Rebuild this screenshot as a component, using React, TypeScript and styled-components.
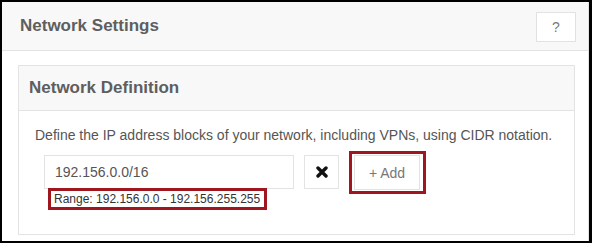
import React from "react";
import styled, { createGlobalStyle } from "styled-components";

const Global = createGlobalStyle`
  html, body { margin: 0; padding: 0; background: #fff; }
  body { font-family: "Liberation Sans", Arial, sans-serif; }
  * { box-sizing: border-box; }
`;

const Frame = styled.div`
  width: 592px;
  height: 243px;
  border-style: solid;
  border-color: #000;
  border-width: 2px 3px 2px 2px;
  background: #fff;
`;

const OuterPanel = styled.div`
  height: 100%;
  border-right: 1px solid #e3e3e3;
  display: flex;
  flex-direction: column;
`;

const OuterHeader = styled.div`
  height: 49px;
  display: flex;
  align-items: center;
  justify-content: space-between;
  padding: 0 12px 0 18px;
  background: #f8f8f8;
  border-bottom: 1px solid #e3e3e3;
`;

const OuterTitle = styled.h2`
  margin: 0;
  font-size: 17px;
  font-weight: bold;
  color: #5e5e5e;
`;

const HelpButton = styled.button`
  width: 40px;
  height: 30px;
  margin-top: 2px;
  border: 1px solid #e2e2e2;
  background: #fff;
  color: #7a7a7a;
  font-family: "Liberation Sans", Arial, sans-serif;
  font-size: 14px;
  padding: 0;
`;

const OuterBody = styled.div`
  padding: 14px 13px 0 16px;
`;

const InnerPanel = styled.div`
  border: 1px solid #e3e3e3;
  height: 170px;
`;

const InnerHeader = styled.div`
  height: 45px;
  display: flex;
  align-items: center;
  padding: 0 10px;
  background: #f8f8f8;
  border-bottom: 1px solid #e3e3e3;
`;

const InnerTitle = styled.h3`
  margin: 0;
  font-size: 17px;
  font-weight: bold;
  color: #5e5e5e;
`;

const InnerBody = styled.div`
  padding: 14px 16px 0 16px;
`;

const Description = styled.p`
  margin: 0 0 10px 0;
  font-size: 14px;
  line-height: 20px;
  color: #555;
`;

const FormRow = styled.div`
  display: flex;
  align-items: flex-start;
  gap: 10px;
  padding-left: 9px;
`;

const FieldColumn = styled.div`
  display: flex;
  flex-direction: column;
  align-items: flex-start;
`;

const CidrInput = styled.input`
  width: 250px;
  height: 34px;
  border: 1px solid #e3e3e3;
  background: #fff;
  padding: 0 10px;
  font-family: "Liberation Sans", Arial, sans-serif;
  font-size: 14px;
  color: #555;
  outline: none;
`;

const RangeNote = styled.div`
  position: relative;
  margin: -1px 0 0 4px;
  width: 219px;
  height: 22px;
  border: 3px solid #a0161f;
  padding: 0 0 0 3px;
  font-size: 12px;
  line-height: 16px;
  color: #333;
`;

const IconButton = styled.button`
  width: 35px;
  height: 34px;
  border: 1px solid #e3e3e3;
  background: #fff;
  padding: 0;
  display: flex;
  align-items: center;
  justify-content: center;
`;

const Highlight = styled.div`
  margin-top: -4px;
  border: 3px solid #a0161f;
  padding: 1px 3px 1px 2px;
`;

const AddButton = styled.button`
  width: 66px;
  height: 35px;
  border: 1px solid #e3e3e3;
  background: #fff;
  padding: 0;
  font-family: "Liberation Sans", Arial, sans-serif;
  font-size: 14px;
  color: #777;
`;

const CrossIcon = () => (
  <svg width="12" height="12" viewBox="0 0 12 12" aria-hidden="true">
    <path
      d="M2 2 L10 10 M10 2 L2 10"
      stroke="#111"
      strokeWidth="3.4"
      strokeLinecap="round"
      fill="none"
    />
  </svg>
);

export default function App() {
  return (
    <>
      <Global />
      <Frame>
        <OuterPanel>
          <OuterHeader>
            <OuterTitle>Network Settings</OuterTitle>
            <HelpButton>?</HelpButton>
          </OuterHeader>
          <OuterBody>
            <InnerPanel>
              <InnerHeader>
                <InnerTitle>Network Definition</InnerTitle>
              </InnerHeader>
              <InnerBody>
                <Description>
                  Define the IP address blocks of your network, including VPNs, using CIDR notation.
                </Description>
                <FormRow>
                  <FieldColumn>
                    <CidrInput defaultValue="192.156.0.0/16" />
                    <RangeNote>Range: 192.156.0.0 - 192.156.255.255</RangeNote>
                  </FieldColumn>
                  <IconButton aria-label="Remove">
                    <CrossIcon />
                  </IconButton>
                  <Highlight>
                    <AddButton>+ Add</AddButton>
                  </Highlight>
                </FormRow>
              </InnerBody>
            </InnerPanel>
          </OuterBody>
        </OuterPanel>
      </Frame>
    </>
  );
}
